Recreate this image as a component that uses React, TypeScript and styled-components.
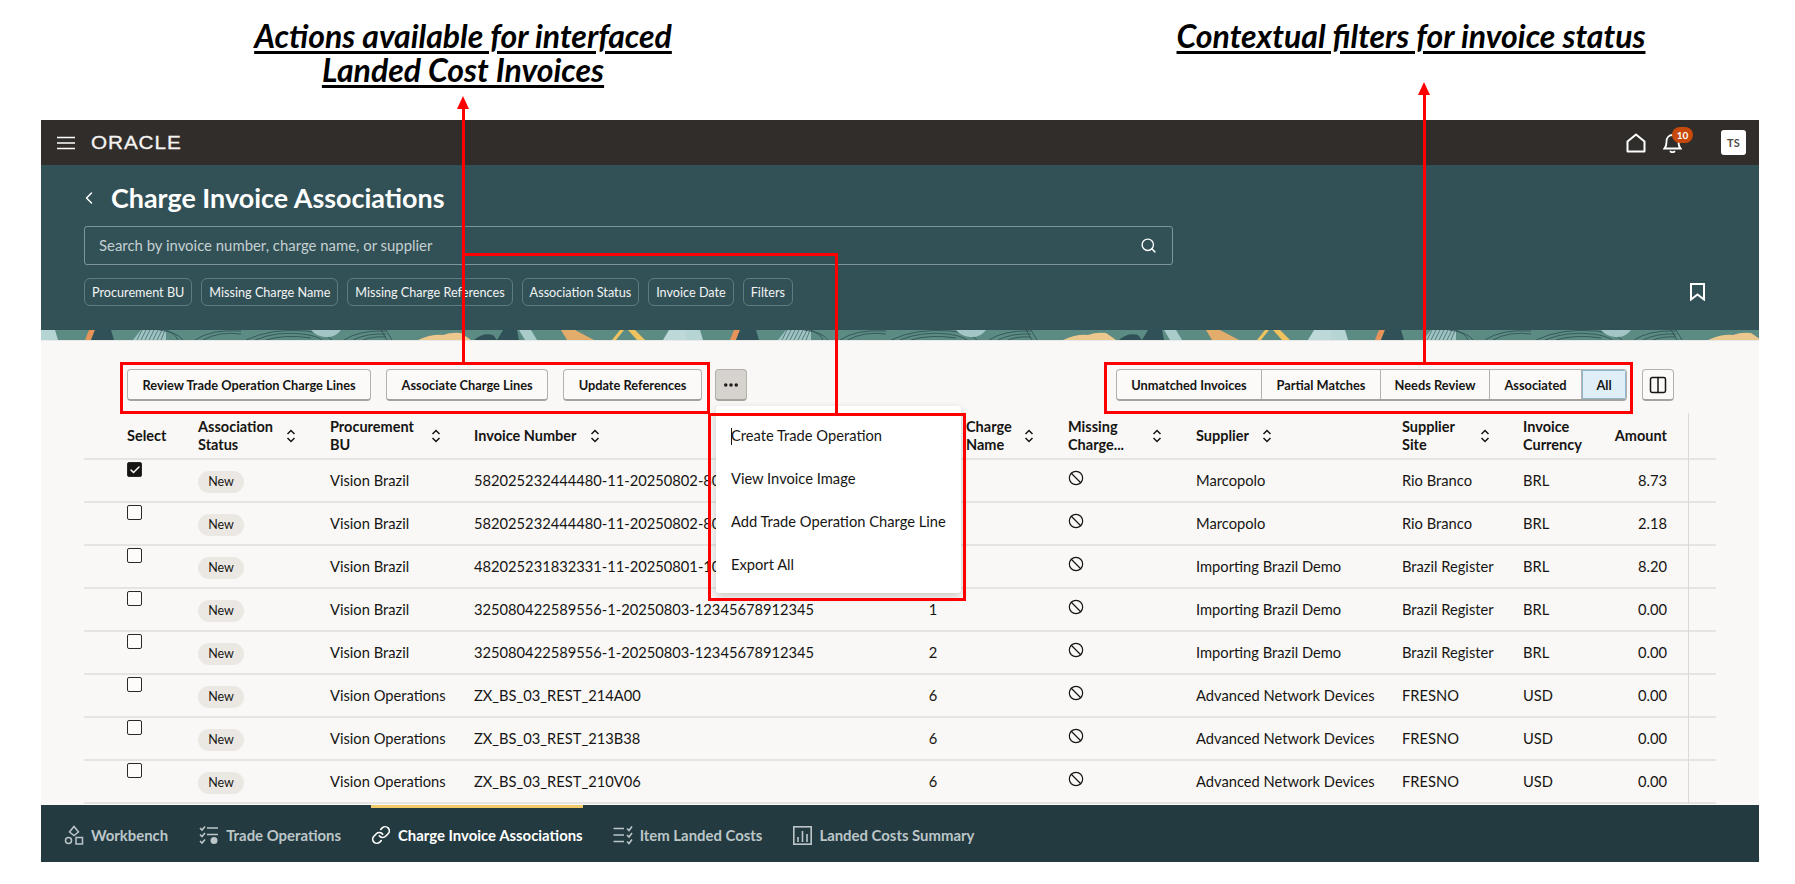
import React from "react";
import styled, { createGlobalStyle } from "styled-components";
import { Ban, Check, ChevronLeft, Columns2, Ellipsis, Link, Search } from "lucide-react";

const GlobalStyle = createGlobalStyle`
  html, body {
    margin: 0;
    padding: 0;
    background: #ffffff;
  }
  body {
    font-family: Lato, "Noto Sans", sans-serif;
    color: #161513;
  }
`;

const Page = styled.div`
  position: relative;
  width: 1795px;
  height: 884px;
  overflow: hidden;
`;

const Notes = styled.div`
  display: flex;
  height: 120px;
  padding-top: 19px;
  box-sizing: border-box;
`;

const Note = styled.div<{ $w: number; $ml?: number }>`
  width: ${(p) => p.$w}px;
  margin-left: ${(p) => p.$ml ?? 0}px;
  text-align: center;
  font-family: Lato, sans-serif;
  font-size: 32px;
  line-height: 34px;
  font-weight: 700;
  font-style: italic;
  text-decoration: underline;
  text-decoration-thickness: 2.5px;
  text-underline-offset: 3px;
  color: #000000;
`;

const RedBox = styled.div<{ $x: number; $y: number; $w: number; $h: number }>`
  position: absolute;
  left: ${(p) => p.$x}px;
  top: ${(p) => p.$y}px;
  width: ${(p) => p.$w}px;
  height: ${(p) => p.$h}px;
  box-sizing: border-box;
  border: 3px solid #fe0000;
  pointer-events: none;
  z-index: 5;
`;

const RedLine = styled.div<{ $x: number; $y: number; $w: number; $h: number }>`
  position: absolute;
  left: ${(p) => p.$x}px;
  top: ${(p) => p.$y}px;
  width: ${(p) => p.$w}px;
  height: ${(p) => p.$h}px;
  background: #fe0000;
  z-index: 5;
`;

const ArrowHead = styled.div<{ $x: number; $y: number }>`
  position: absolute;
  left: ${(p) => p.$x - 6}px;
  top: ${(p) => p.$y}px;
  width: 0;
  height: 0;
  border-left: 6px solid transparent;
  border-right: 6px solid transparent;
  border-bottom: 13px solid #fe0000;
  z-index: 5;
`;

const Shell = styled.div`
  margin-left: 41px;
  width: 1718px;
`;

const TopBar = styled.header`
  display: flex;
  align-items: center;
  height: 45px;
  padding: 0 13px 0 16px;
  box-sizing: border-box;
  background: #312d2a;
  color: #ffffff;
`;

const Logo = styled.span`
  margin-left: 16px;
  font-family: "Liberation Sans", sans-serif;
  font-size: 18px;
  letter-spacing: 0.8px;
  -webkit-text-stroke: 0.3px #f5f4f2;
  transform: scaleX(1.15);
  transform-origin: left center;
  line-height: 1;
  color: #f5f4f2;
`;

const TopRight = styled.div`
  display: flex;
  align-items: center;
  margin-left: auto;
`;

const BellWrap = styled.div`
  position: relative;
  display: flex;
  margin-left: 17px;
  margin-right: 39px;
`;

const Badge = styled.span`
  position: absolute;
  left: 9px;
  top: -6px;
  width: 21px;
  height: 16px;
  border-radius: 8px;
  background: #c74a0c;
  color: #ffffff;
  font-size: 10px;
  font-weight: 700;
  line-height: 16px;
  text-align: center;
`;

const Avatar = styled.div`
  display: flex;
  align-items: center;
  justify-content: center;
  width: 25px;
  height: 25px;
  border-radius: 3px;
  background: #ffffff;
  color: #4d4a47;
  font-size: 11px;
  font-weight: 700;
  letter-spacing: 0.3px;
`;

const PageHead = styled.section`
  position: relative;
  height: 165px;
  padding: 0 43px;
  box-sizing: border-box;
  background: #325157;
  color: #ffffff;
`;

const TitleRow = styled.div`
  display: flex;
  align-items: center;
  height: 61px;
  padding-top: 5px;
  box-sizing: border-box;
`;

const Title = styled.h1`
  margin: 0 0 0 12px;
  font-size: 26.9px;
  font-weight: 700;
  line-height: 32px;
  color: #ffffff;
`;

const SearchBox = styled.div`
  display: flex;
  align-items: center;
  justify-content: space-between;
  width: 1089px;
  height: 39px;
  padding: 0 15px 1px 14px;
  box-sizing: border-box;
  border: 1px solid #7e9699;
  border-radius: 3px;
  font-size: 14.9px;
  color: #c5d0d1;
`;

const ChipRow = styled.div`
  display: flex;
  gap: 9px;
  margin-top: 13px;
`;

const Chip = styled.div`
  height: 28px;
  padding: 0 7px;
  box-sizing: border-box;
  border: 1px solid #5f7b80;
  border-radius: 6px;
  font-size: 12.65px;
  line-height: 27px;
  color: #f2f4f4;
`;

const BookmarkSlot = styled.div`
  position: absolute;
  right: 54px;
  top: 118px;
  display: flex;
`;

const Banner = styled.svg`
  display: block;
  width: 1718px;
  height: 10px;
`;

const Content = styled.main`
  height: 465px;
  overflow: hidden;
  border-top: 1px solid #e6ebea;
  box-sizing: border-box;
  background: #f9f8f6;
`;

const Toolbar = styled.div`
  position: relative;
  z-index: 2;
  display: flex;
  align-items: flex-start;
  justify-content: space-between;
  padding: 28px 85px 0 86px;
`;

const ActionGroup = styled.div`
  display: flex;
  gap: 15px;
`;

const Button = styled.div`
  height: 32px;
  padding: 0 14.5px;
  box-sizing: border-box;
  border: 1px solid #b4b1ad;
  border-bottom: 2px solid #a5a29e;
  border-radius: 4px;
  background: #fbfaf9;
  font-size: 12.8px;
  font-weight: 700;
  line-height: 30px;
  white-space: nowrap;
  color: #161513;
`;

const KebabWrap = styled.div`
  position: relative;
  margin-left: -2px;
`;

const Kebab = styled.div`
  display: flex;
  align-items: center;
  justify-content: center;
  width: 32px;
  height: 32px;
  box-sizing: border-box;
  border: 1px solid #b4b1ad;
  border-bottom: 2px solid #a5a29e;
  border-radius: 4px;
  background: #d6d3cf;
`;

const Menu = styled.div`
  position: absolute;
  left: 1px;
  top: 37px;
  width: 245px;
  padding: 8px 0 7px;
  background: #ffffff;
  border-radius: 3px;
  box-shadow: 0 3px 8px rgba(0, 0, 0, 0.2);
`;

const MenuItem = styled.div`
  height: 43px;
  padding-left: 15px;
  font-size: 14.7px;
  line-height: 43px;
  white-space: nowrap;
  color: #161513;
`;

const Caret = styled.span`
  display: inline-block;
  width: 1px;
  height: 17px;
  margin-right: -1px;
  vertical-align: -4px;
  background: #161513;
`;

const ToolRight = styled.div`
  display: flex;
  gap: 15px;
`;

const Segments = styled.div`
  display: flex;
  height: 32px;
  box-sizing: border-box;
  border: 1px solid #b4b1ad;
  border-bottom: 2px solid #a5a29e;
  border-radius: 4px;
  overflow: hidden;
  background: #fbfaf9;
`;

const Segment = styled.div<{ $w: number; $on?: boolean }>`
  width: ${(p) => p.$w}px;
  box-sizing: border-box;
  border-right: ${(p) => (p.$on ? "none" : "1px solid #b4b1ad")};
  background: ${(p) => (p.$on ? "#e0eff7" : "transparent")};
  box-shadow: ${(p) => (p.$on ? "inset 0 0 0 1px #8fb8d0" : "none")};
  font-size: 12.8px;
  font-weight: 700;
  line-height: 30px;
  text-align: center;
  white-space: nowrap;
  color: #161513;
`;

const PaneButton = styled(Kebab)`
  background: #fbfaf9;
`;

const Table = styled.div`
  width: 1632px;
  margin: 12px 0 0 43px;
`;

const COLUMNS = "114px 132px 144px 426px 66px 102px 128px 206px 121px 77px 67px 21px 28px";

const HeadRow = styled.div`
  display: grid;
  grid-template-columns: ${COLUMNS};
  height: 47px;
  box-sizing: border-box;
  border-bottom: 2px solid #e6e4e0;
  font-size: 14.5px;
  font-weight: 700;
  line-height: 18px;
  color: #161513;
`;

const Row = styled.div`
  display: grid;
  grid-template-columns: ${COLUMNS};
  height: 43px;
  box-sizing: border-box;
  border-bottom: 2px solid #e6e4e0;
  font-size: 14.7px;
  color: #161513;
`;

const HeadCell = styled.div<{ $pad?: number; $right?: boolean }>`
  display: flex;
  align-items: center;
  justify-content: ${(p) => (p.$right ? "flex-end" : "flex-start")};
  padding-left: ${(p) => p.$pad ?? 0}px;
`;

const HeadLabel = styled.span<{ $w: number; $nowrap?: boolean }>`
  width: ${(p) => p.$w}px;
  flex: none;
  white-space: ${(p) => (p.$nowrap ? "nowrap" : "normal")};
`;

const Cell = styled.div<{ $align?: string }>`
  display: flex;
  align-items: center;
  justify-content: ${(p) => p.$align ?? "flex-start"};
  padding-bottom: 1px;
  white-space: nowrap;
`;

const SelectCell = styled.div`
  padding: 2px 0 0 43px;
`;

const Box = styled.div<{ $on?: boolean }>`
  display: flex;
  align-items: center;
  justify-content: center;
  width: 15px;
  height: 15px;
  box-sizing: border-box;
  border: 1.5px solid #2b2825;
  border-radius: 2px;
  background: ${(p) => (p.$on ? "#161513" : "#fdfcfb")};
`;

const Pill = styled.span`
  width: 46px;
  height: 22px;
  border-radius: 11px;
  background: #ebe8e4;
  font-size: 12.5px;
  line-height: 22px;
  text-align: center;
  margin-top: 3px;
`;

const MissingCell = styled(Cell)`
  padding-bottom: 6px;
`;

const EdgeCell = styled.div`
  border-left: 1px solid #dcdad6;
  margin-bottom: -2px;
`;

const BottomBar = styled.nav`
  display: flex;
  height: 57px;
  padding-left: 23px;
  box-sizing: border-box;
  background: #233a40;
`;

const Tab = styled.div<{ $on?: boolean; $ml: number }>`
  display: flex;
  align-items: center;
  gap: 7px;
  height: 57px;
  margin-left: ${(p) => p.$ml}px;
  box-sizing: border-box;
  border-top: 3px solid ${(p) => (p.$on ? "#f0c96b" : "transparent")};
  font-size: 14.9px;
  font-weight: 700;
  white-space: nowrap;
  color: ${(p) => (p.$on ? "#ffffff" : "#bcc6c8")};
`;

const Hamburger = () => (
  <svg width="18" height="14" viewBox="0 0 18 14" fill="none" stroke="#ffffff" strokeWidth="1.6">
    <path d="M0 1.5H18M0 7H18M0 12.5H18" />
  </svg>
);

const HomeIcon = () => (
  <svg width="20" height="20" viewBox="0 0 20 20" fill="none" stroke="#ffffff" strokeWidth="2" strokeLinejoin="round">
    <path d="M10 1.5L18.5 8.5V18.5H1.5V8.5Z" />
  </svg>
);

const BellIcon = () => (
  <svg width="19" height="20" viewBox="0 0 19 20" fill="none" stroke="#ffffff" strokeWidth="1.8" strokeLinecap="round">
    <path d="M1.5 15.5C3.5 13.5 3.5 11 3.5 8.5C3.5 4.5 6 2 9.5 2C13 2 15.5 4.5 15.5 8.5C15.5 11 15.5 13.5 17.5 15.5Z" />
    <path d="M7.5 18.5C8.5 19.3 10.5 19.3 11.5 18.5" />
  </svg>
);

const BookmarkIcon = () => (
  <svg width="15" height="18" viewBox="0 0 15 18" fill="none" stroke="#ffffff" strokeWidth="2">
    <path d="M1 1H14V16.5L7.5 11.5L1 16.5Z" />
  </svg>
);

const SortIcon = () => (
  <svg width="10" height="14" viewBox="0 0 10 14" fill="none" stroke="#161513" strokeWidth="1.5" style={{ marginLeft: 13, flex: "none" }}>
    <path d="M1.5 5L5 1.5L8.5 5M1.5 9L5 12.5L8.5 9" />
  </svg>
);

const WorkbenchIcon = ({ color }: { color: string }) => (
  <svg width="20" height="20" viewBox="0 0 20 20" fill="none" stroke={color} strokeWidth="1.5">
    <path d="M10 1.5L14.5 7L10 10.5L5.5 7Z" />
    <circle cx="4.5" cy="15.5" r="3" />
    <rect x="12" y="12.5" width="6.5" height="6.5" />
  </svg>
);

const TradeIcon = ({ color }: { color: string }) => (
  <svg width="20" height="20" viewBox="0 0 20 20" fill="none" stroke={color} strokeWidth="1.6">
    <path d="M1 3L3 5L6 1.5M1 9.5L3 11.5L6 8M1 16L3 18L6 14.5" />
    <path d="M8 3H19M8 9.5H19" />
    <circle cx="15" cy="15.5" r="3.5" fill={color} stroke="none" />
  </svg>
);

const ItemsIcon = ({ color }: { color: string }) => (
  <svg width="20" height="20" viewBox="0 0 20 20" fill="none" stroke={color} strokeWidth="1.6">
    <path d="M0.5 3.5H11M0.5 10H11M0.5 16.5H11" />
    <path d="M14 3.5L16 5.5L19 1.5M14 10L16 12L19 8M14 16.5L16 18.5L19 14.5" />
  </svg>
);

const SummaryIcon = ({ color }: { color: string }) => (
  <svg width="19" height="19" viewBox="0 0 19 19" fill="none" stroke={color} strokeWidth="1.6">
    <rect x="0.8" y="0.8" width="17.4" height="17.4" />
    <path d="M5 16V11M9.5 16V5M14 16V8" />
  </svg>
);

const PatternTile = () => (
  <g>
    <polygon points="0,0 14,0 17,10 0,10" fill="#b7d4d4" />
    <polygon points="48,0 54,0 50,10 44,10" fill="#e8935a" />
    <polygon points="54,0 70,0 73,10 50,10" fill="#2f5157" />
    <polygon points="92,10 100,0 125,0 125,10" fill="#9fc3c2" />
    <path
      d="M96 10L101 0M100 10L105 0M104 10L109 0M108 10L113 0M112 10L117 0M116 10L121 0M120 10L124 0"
      stroke="#45686b"
      strokeWidth="0.8"
    />
    <path
      d="M118 0Q136 2 142 10M124 0Q134 3 137 10M154 10Q170 -1 200 1M162 10Q178 1 200 4M205 10Q230 -2 265 1Q285 3 291 10M214 10Q235 1 262 4Q276 6 281 10M225 10Q244 4 270 8"
      stroke="#2d4c50"
      strokeWidth="0.8"
      fill="none"
    />
    <path d="M270 0H300Q294 8 284 7Q275 6 270 0Z" fill="#a3c5c5" />
    <path
      d="M303 10Q318 0 345 1M312 10Q326 3 345 4M322 10Q332 6 345 7M345 0L351 10M340 0L346 10"
      stroke="#2d4c50"
      strokeWidth="0.8"
      fill="none"
    />
    <path d="M377 10Q390 4 402 5Q410 2 420 3Q426 7 430 10Z" fill="#edc88e" />
    <path d="M433 10Q442 2 452 5L456 10Z" fill="#2f5157" />
    <polygon points="462,0 476,0 478,10 456,10" fill="#2f5157" />
    <polygon points="478,0 490,0 496,10 484,10" fill="#a9cbca" />
    <polygon points="520,0 534,0 553,10 526,10" fill="#e2ac6b" />
    <polygon points="579,0 583,0 575,10 571,10" fill="#f1c35e" />
    <polygon points="587,0 594,0 604,10 596,10" fill="#f1c35e" />
    <polygon points="628,0 658,0 661,10 622,10" fill="#bcd8d9" />
  </g>
);

const PageBanner = () => (
  <Banner viewBox="0 0 1718 10" preserveAspectRatio="none">
    <rect width="1718" height="10" fill="#5c8b84" />
    <PatternTile />
    <g transform="translate(645 0)">
      <PatternTile />
    </g>
    <g transform="translate(1290 0)">
      <PatternTile />
    </g>
  </Banner>
);

type InvoiceRow = {
  bu: string;
  invoice: string;
  lines: string;
  supplier: string;
  site: string;
  currency: string;
  amount: string;
};

const rows: InvoiceRow[] = [
  { bu: "Vision Brazil", invoice: "582025232444480-11-20250802-803", lines: "", supplier: "Marcopolo", site: "Rio Branco", currency: "BRL", amount: "8.73" },
  { bu: "Vision Brazil", invoice: "582025232444480-11-20250802-803", lines: "", supplier: "Marcopolo", site: "Rio Branco", currency: "BRL", amount: "2.18" },
  { bu: "Vision Brazil", invoice: "482025231832331-11-20250801-104", lines: "", supplier: "Importing Brazil Demo", site: "Brazil Register", currency: "BRL", amount: "8.20" },
  { bu: "Vision Brazil", invoice: "325080422589556-1-20250803-12345678912345", lines: "1", supplier: "Importing Brazil Demo", site: "Brazil Register", currency: "BRL", amount: "0.00" },
  { bu: "Vision Brazil", invoice: "325080422589556-1-20250803-12345678912345", lines: "2", supplier: "Importing Brazil Demo", site: "Brazil Register", currency: "BRL", amount: "0.00" },
  { bu: "Vision Operations", invoice: "ZX_BS_03_REST_214A00", lines: "6", supplier: "Advanced Network Devices", site: "FRESNO", currency: "USD", amount: "0.00" },
  { bu: "Vision Operations", invoice: "ZX_BS_03_REST_213B38", lines: "6", supplier: "Advanced Network Devices", site: "FRESNO", currency: "USD", amount: "0.00" },
  { bu: "Vision Operations", invoice: "ZX_BS_03_REST_210V06", lines: "6", supplier: "Advanced Network Devices", site: "FRESNO", currency: "USD", amount: "0.00" },
];

const chips = ["Procurement BU", "Missing Charge Name", "Missing Charge References", "Association Status", "Invoice Date", "Filters"];

const App: React.FC = () => {
  return (
    <Page>
      <GlobalStyle />
      <Notes>
        <Note $w={926}>
          Actions available for interfaced
          <br />
          Landed Cost Invoices
        </Note>
        <Note $w={768} $ml={101}>
          Contextual filters for invoice status
        </Note>
      </Notes>

      <Shell>
        <TopBar>
          <Hamburger />
          <Logo>ORACLE</Logo>
          <TopRight>
            <HomeIcon />
            <BellWrap>
              <BellIcon />
              <Badge>10</Badge>
            </BellWrap>
            <Avatar>TS</Avatar>
          </TopRight>
        </TopBar>

        <PageHead>
          <TitleRow>
            <ChevronLeft size={20} color="#ffffff" strokeWidth={1.8} style={{ marginLeft: -5 }} />
            <Title>Charge Invoice Associations</Title>
          </TitleRow>
          <SearchBox>
            <span>Search by invoice number, charge name, or supplier</span>
            <Search size={17} color="#ffffff" strokeWidth={2} />
          </SearchBox>
          <ChipRow>
            {chips.map((c) => (
              <Chip key={c}>{c}</Chip>
            ))}
          </ChipRow>
          <BookmarkSlot>
            <BookmarkIcon />
          </BookmarkSlot>
        </PageHead>

        <PageBanner />

        <Content>
          <Toolbar>
            <ActionGroup>
              <Button>Review Trade Operation Charge Lines</Button>
              <Button>Associate Charge Lines</Button>
              <Button>Update References</Button>
              <KebabWrap>
                <Kebab>
                  <Ellipsis size={18} color="#161513" strokeWidth={2.6} />
                </Kebab>
                <Menu>
                  <MenuItem>
                    <Caret />
                    Create Trade Operation
                  </MenuItem>
                  <MenuItem>View Invoice Image</MenuItem>
                  <MenuItem>Add Trade Operation Charge Line</MenuItem>
                  <MenuItem>Export All</MenuItem>
                </Menu>
              </KebabWrap>
            </ActionGroup>
            <ToolRight>
              <Segments>
                <Segment $w={145}>Unmatched Invoices</Segment>
                <Segment $w={119}>Partial Matches</Segment>
                <Segment $w={109}>Needs Review</Segment>
                <Segment $w={92}>Associated</Segment>
                <Segment $w={44} $on>
                  All
                </Segment>
              </Segments>
              <PaneButton>
                <Columns2 size={20} color="#161513" strokeWidth={1.8} />
              </PaneButton>
            </ToolRight>
          </Toolbar>

          <Table>
            <HeadRow>
              <HeadCell $pad={43}>Select</HeadCell>
              <HeadCell>
                <HeadLabel $w={75}>Association Status</HeadLabel>
                <SortIcon />
              </HeadCell>
              <HeadCell>
                <HeadLabel $w={88}>Procurement BU</HeadLabel>
                <SortIcon />
              </HeadCell>
              <HeadCell>
                <HeadLabel $w={103} $nowrap>
                  Invoice Number
                </HeadLabel>
                <SortIcon />
              </HeadCell>
              <HeadCell />
              <HeadCell>
                <HeadLabel $w={45}>Charge Name</HeadLabel>
                <SortIcon />
              </HeadCell>
              <HeadCell>
                <HeadLabel $w={71}>Missing Charge...</HeadLabel>
                <SortIcon />
              </HeadCell>
              <HeadCell>
                <HeadLabel $w={53}>Supplier</HeadLabel>
                <SortIcon />
              </HeadCell>
              <HeadCell>
                <HeadLabel $w={65}>Supplier Site</HeadLabel>
                <SortIcon />
              </HeadCell>
              <HeadCell>Invoice Currency</HeadCell>
              <HeadCell $right>Amount</HeadCell>
              <HeadCell />
              <EdgeCell />
            </HeadRow>

            {rows.map((r, i) => (
              <Row key={i}>
                <SelectCell>
                  <Box $on={i === 0}>{i === 0 && <Check size={12} color="#ffffff" strokeWidth={3} />}</Box>
                </SelectCell>
                <Cell>
                  <Pill>New</Pill>
                </Cell>
                <Cell>{r.bu}</Cell>
                <Cell>{r.invoice}</Cell>
                <Cell $align="center">{r.lines}</Cell>
                <Cell />
                <MissingCell>
                  <Ban size={16} color="#161513" strokeWidth={1.8} />
                </MissingCell>
                <Cell>{r.supplier}</Cell>
                <Cell>{r.site}</Cell>
                <Cell>{r.currency}</Cell>
                <Cell $align="flex-end">{r.amount}</Cell>
                <Cell />
                <EdgeCell />
              </Row>
            ))}
          </Table>
        </Content>

        <BottomBar>
          <Tab $ml={0}>
            <WorkbenchIcon color="#bcc6c8" />
            Workbench
          </Tab>
          <Tab $ml={31}>
            <TradeIcon color="#bcc6c8" />
            Trade Operations
          </Tab>
          <Tab $ml={30} $on>
            <Link size={20} color="#ffffff" strokeWidth={2} />
            Charge Invoice Associations
          </Tab>
          <Tab $ml={30}>
            <ItemsIcon color="#bcc6c8" />
            Item Landed Costs
          </Tab>
          <Tab $ml={31}>
            <SummaryIcon color="#bcc6c8" />
            Landed Costs Summary
          </Tab>
        </BottomBar>
      </Shell>

      <ArrowHead $x={463} $y={96} />
      <RedLine $x={462} $y={106} $w={3} $h={257} />
      <RedLine $x={462} $y={253} $w={376} $h={3} />
      <RedLine $x={835} $y={253} $w={3} $h={161} />
      <RedBox $x={120} $y={362} $w={590} $h={52} />
      <RedBox $x={708} $y={413} $w={258} $h={188} />
      <ArrowHead $x={1424} $y={82} />
      <RedLine $x={1423} $y={92} $w={3} $h={271} />
      <RedBox $x={1104} $y={362} $w={529} $h={52} />
    </Page>
  );
};

export default App;
